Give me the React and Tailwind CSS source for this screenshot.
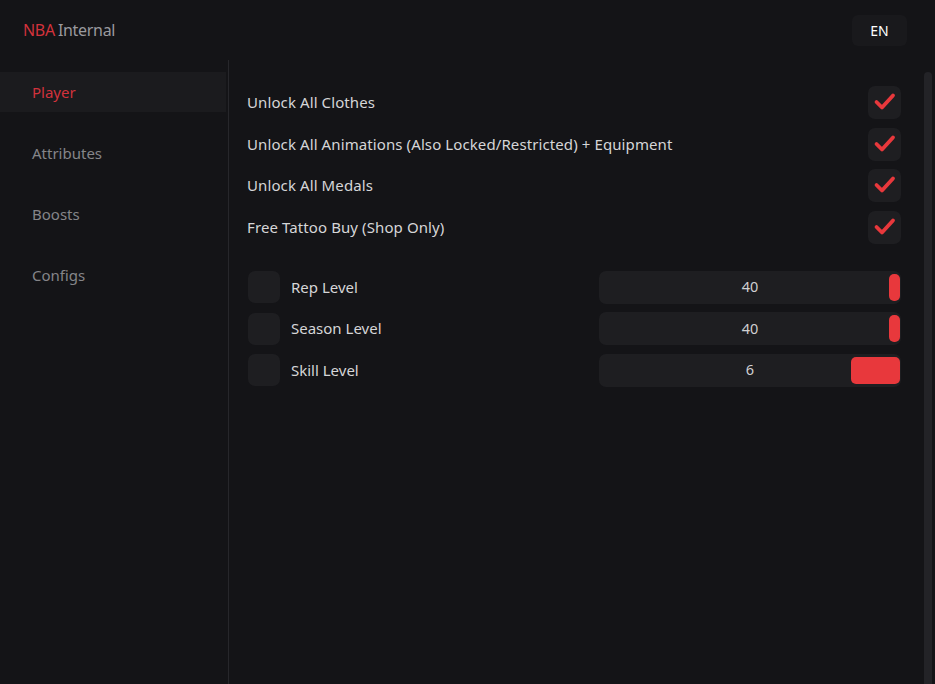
import React from "react"

const toggles = [
  "Unlock All Clothes",
  "Unlock All Animations (Also Locked/Restricted) + Equipment",
  "Unlock All Medals",
  "Free Tattoo Buy (Shop Only)",
]

const sliders = [
  { label: "Rep Level", value: 40, thumb: "w-[11px]" },
  { label: "Season Level", value: 40, thumb: "w-[11px]" },
  { label: "Skill Level", value: 6, thumb: "w-[49px]" },
]

const tabs = ["Player", "Attributes", "Boosts", "Configs"]

function Check() {
  return (
    <div className="w-[33px] h-[33px] rounded-[7px] bg-[#1e1e21] flex items-center justify-center">
      <svg width="33" height="33" viewBox="0 0 33 33">
        <polyline points="8.5,16 14,21.5 25,9.5" fill="none" stroke="#e8383c" strokeWidth="3.8" strokeLinecap="round" strokeLinejoin="round" />
      </svg>
    </div>
  )
}

export default function App() {
  return (
    <div className="h-[684px] w-full bg-[#141417] flex flex-col overflow-hidden text-[#d6d6d8]" style={{ fontFamily: '"Noto Sans", "Open Sans", sans-serif' }}>
      <header className="h-[60px] flex items-center justify-between pl-[23px] pr-[28px] shrink-0">
        <div className="text-[16px] tracking-[-0.3px]">
          <span className="text-[#d2323c]">NBA</span>
          <span className="text-[#9a9a9e] ml-[3px]">Internal</span>
        </div>
        <div className="w-[55px] h-[31px] rounded-[6px] bg-[#19191c] flex items-center justify-center text-[14px] text-white">EN</div>
      </header>

      <div className="flex flex-1 min-h-0">
        <aside className="w-[229px] shrink-0 border-r border-[#27272b] pt-[12px] flex flex-col gap-[21px]">
          {tabs.map((t, i) => (
            <div
              key={t}
              className={
                i === 0
                  ? "h-[40px] w-[226px] flex items-center pl-[32px] text-[15px] bg-[#1b1b1e] text-[#d2323c]"
                  : "h-[40px] w-[226px] flex items-center pl-[32px] text-[15px] text-[#858589]"
              }
            >
              {t}
            </div>
          ))}
        </aside>

        <main className="flex-1 flex min-w-0">
          <div className="flex-1 pl-[18px] pr-[8px] pt-[26px]">
            <div className="flex flex-col gap-[8.5px]">
              {toggles.map((t) => (
                <div key={t} className="flex items-center justify-between h-[33px]">
                  <span className="text-[15px] tracking-[0.1px]">{t}</span>
                  <Check />
                </div>
              ))}
            </div>

            <div className="flex flex-col gap-[8.5px] mt-[27px]">
              {sliders.map((s) => (
                <div key={s.label} className="flex items-center h-[33px]">
                  <div className="w-[32px] h-[32px] rounded-[7px] bg-[#1e1e21] ml-[1px]" />
                  <span className="ml-[11px] text-[15px] flex-1">{s.label}</span>
                  <div className="relative w-[302px] h-[33px] rounded-[7px] bg-[#1e1e21] flex items-center justify-center text-[14.5px] text-[#d0d0d2]">
                    {s.value}
                    <div className={"absolute right-[1px] top-[3px] bottom-[3px] rounded-[5px] bg-[#e8383c] " + s.thumb} />
                  </div>
                </div>
              ))}
            </div>
          </div>
          <div className="w-[26px] shrink-0 pt-[12px] pl-[15px] pr-[3px]">
            <div className="h-full w-[8px] rounded-t-[4px] bg-[#232327]" />
          </div>
        </main>
      </div>
    </div>
  )
}
